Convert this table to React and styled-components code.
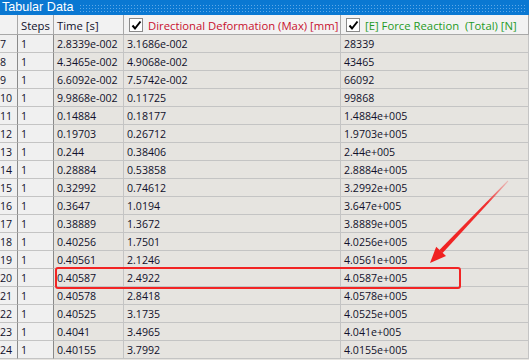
import React from 'react'
import styled, { createGlobalStyle } from 'styled-components'

const GlobalStyle = createGlobalStyle`
  html, body {
    margin: 0;
    padding: 0;
    background: #e6e4e0;
  }
  body {
    font-family: "Open Sans", "Noto Sans", sans-serif;
  }
`

const Panel = styled.div`
  position: relative;
  width: 529px;
  height: 360px;
  overflow: hidden;
  background: #e6e4e0;
`

const TitleBar = styled.div`
  display: flex;
  align-items: center;
  height: 15px;
  background-color: #0a78d2;
  color: #fff;
  font-family: "Liberation Sans", Arial, sans-serif;
  font-size: 12.6px;
`

const TitleText = styled.span`
  padding: 0 6px 0 2px;
  line-height: 15px;
`

const Dots = styled.div`
  flex: 1;
  height: 8px;
  margin-right: 4px;
  background-image: radial-gradient(circle, #5fa8e6 0.8px, transparent 1px);
  background-size: 3px 3px;
`

const Grid = styled.div`
  display: grid;
  grid-template-columns: 18px 36px 70px 217px 1fr;
  grid-template-rows: 20px;
  grid-auto-rows: 18px;
  font-size: 10.6px;
  color: #10102a;
`

const HeaderCell = styled.div`
  display: flex;
  align-items: center;
  gap: 4px;
  padding: 1px 3px 0 ${p => (p.$check ? 5 : 3)}px;
  background: #f2f2f2;
  border-right: 1px solid #a8a8a8;
  border-bottom: 1px solid #a8a8a8;
  color: ${p => p.$color || '#10102a'};
  white-space: pre;
  overflow: hidden;
  font-size: 11.3px;
`

const Cell = styled.div`
  display: flex;
  align-items: center;
  padding: 0 ${p => (p.$tight ? 0 : 3)}px;
  background: ${p => (p.$light ? '#f0f0f0' : '#e6e4e0')};
  border-right: 1px solid ${p => (p.$dark ? '#8a8a8a' : '#c4c4c4')};
  border-bottom: 1px solid #c4c4c4;
  white-space: nowrap;
  overflow: hidden;
`

const Check = styled.span`
  display: inline-flex;
  align-items: center;
  justify-content: center;
  width: 14px;
  height: 14px;
  margin-right: 1px;
  box-sizing: border-box;
  border: 1px solid #8a8a8a;
  background: #fff;
  flex: none;
`

const Highlight = styled.div`
  position: absolute;
  left: 55px;
  top: 267px;
  width: 406px;
  height: 22px;
  box-sizing: border-box;
  border: 2.5px solid #f22424;
  border-radius: 3px;
  pointer-events: none;
`

const Arrow = styled.svg`
  position: absolute;
  left: 0;
  top: 0;
  pointer-events: none;
`

const rows = [
  [7, '2.8339e-002', '3.1686e-002', '28339'],
  [8, '4.3465e-002', '4.9068e-002', '43465'],
  [9, '6.6092e-002', '7.5742e-002', '66092'],
  [10, '9.9868e-002', '0.11725', '99868'],
  [11, '0.14884', '0.18177', '1.4884e+005'],
  [12, '0.19703', '0.26712', '1.9703e+005'],
  [13, '0.244', '0.38406', '2.44e+005'],
  [14, '0.28884', '0.53858', '2.8884e+005'],
  [15, '0.32992', '0.74612', '3.2992e+005'],
  [16, '0.3647', '1.0194', '3.647e+005'],
  [17, '0.38889', '1.3672', '3.8889e+005'],
  [18, '0.40256', '1.7501', '4.0256e+005'],
  [19, '0.40561', '2.1246', '4.0561e+005'],
  [20, '0.40587', '2.4922', '4.0587e+005'],
  [21, '0.40578', '2.8418', '4.0578e+005'],
  [22, '0.40525', '3.1735', '4.0525e+005'],
  [23, '0.4041', '3.4965', '4.041e+005'],
  [24, '0.40155', '3.7992', '4.0155e+005'],
]

const Tick = () => (
  <svg width="11" height="11" viewBox="0 0 11 11">
    <path d="M1.5 5.5 L4 8.5 L9.5 1.5" fill="none" stroke="#000" strokeWidth="2" />
  </svg>
)

const App = () => {
  return (
    <Panel>
      <GlobalStyle />
      <TitleBar>
        <TitleText>Tabular Data</TitleText>
        <Dots />
      </TitleBar>
      <Grid>
        <HeaderCell />
        <HeaderCell>Steps</HeaderCell>
        <HeaderCell>Time [s]</HeaderCell>
        <HeaderCell $check $color="#c8102e">
          <Check><Tick /></Check>
          Directional Deformation (Max) [mm]
        </HeaderCell>
        <HeaderCell $check $color="#1f9a1f">
          <Check><Tick /></Check>
          [E] Force Reaction  (Total) [N]
        </HeaderCell>
        {rows.map(([n, t, d, f]) => (
          <React.Fragment key={n}>
            <Cell $light $dark $tight>{n}</Cell>
            <Cell $light $dark>1</Cell>
            <Cell>{t}</Cell>
            <Cell>{d}</Cell>
            <Cell>{f}</Cell>
          </React.Fragment>
        ))}
      </Grid>
      <Highlight />
      <Arrow width="529" height="360">
        <defs>
          <linearGradient id="shaft" x1="508" y1="181" x2="440" y2="252" gradientUnits="userSpaceOnUse">
            <stop offset="0" stopColor="#f26060" stopOpacity="0.3" />
            <stop offset="0.3" stopColor="#f03030" />
            <stop offset="1" stopColor="#f02020" />
          </linearGradient>
        </defs>
        <polygon points="508.3,181.4 507.7,180.6 439.4,249.9 442.6,252.9" fill="url(#shaft)" />
        <polygon points="430,263 436.2,246.8 446,256" fill="#f02020" />
      </Arrow>
    </Panel>
  )
}

export default App
